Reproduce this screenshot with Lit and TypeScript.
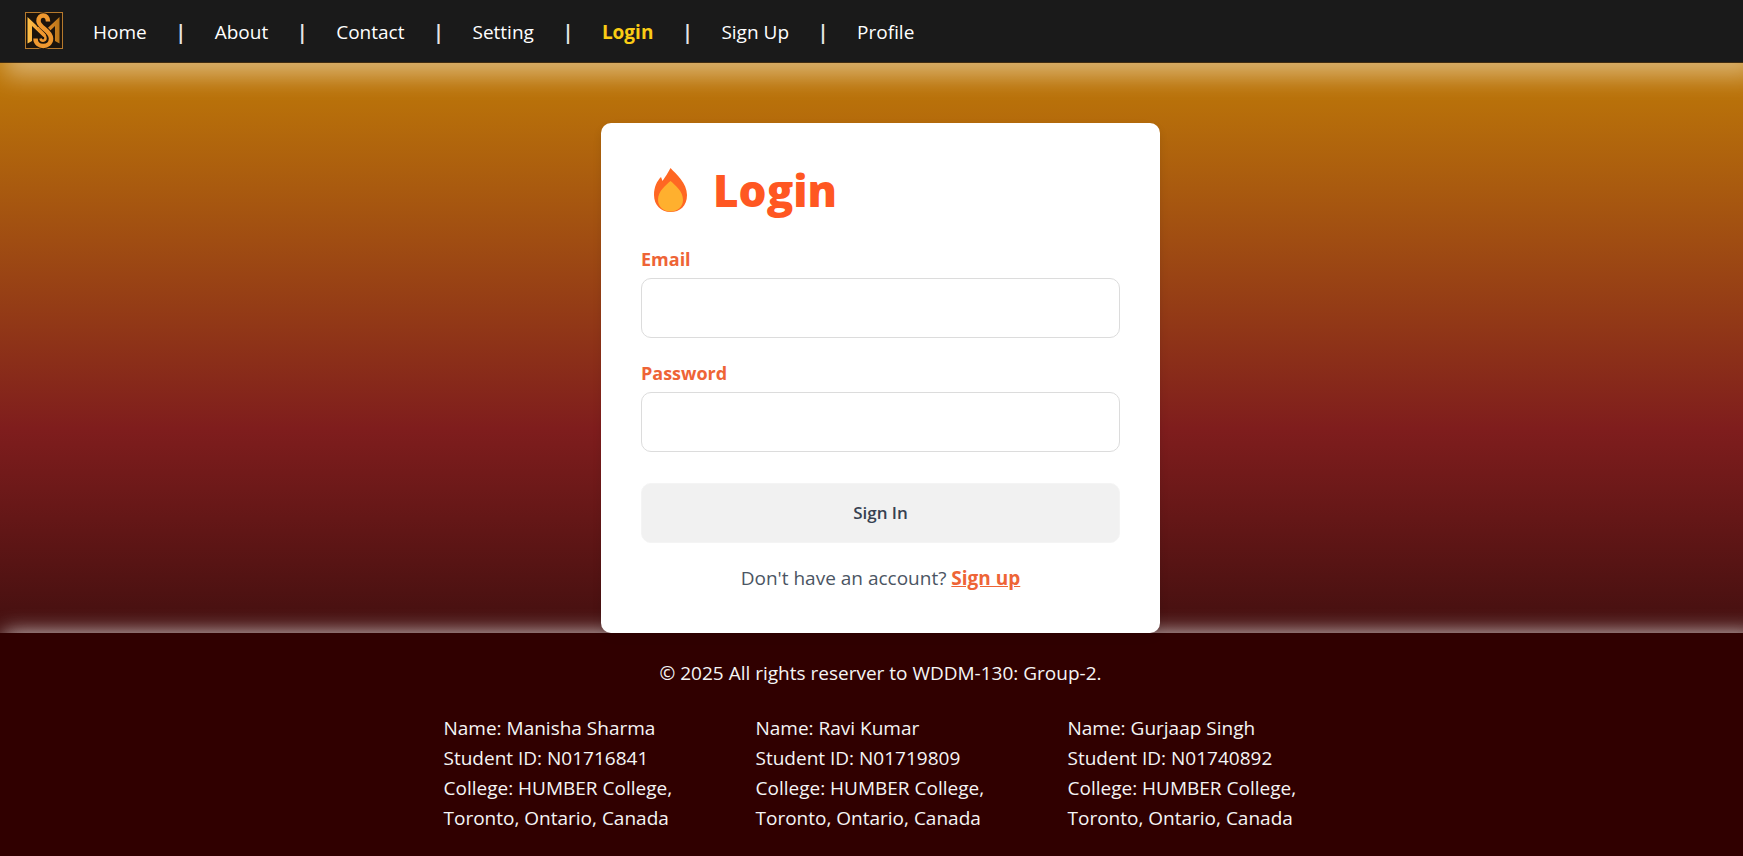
import { LitElement, html, css } from "lit";
import { customElement, property } from "lit/decorators.js";

const links = ["Home", "About", "Contact", "Setting", "Login", "Sign Up", "Profile"];
const students = [
  { name: "Manisha Sharma", id: "N01716841" },
  { name: "Ravi Kumar", id: "N01719809" },
  { name: "Gurjaap Singh", id: "N01740892" },
];

@customElement("site-nav")
class SiteNav extends LitElement {
  @property() current = "";

  static styles = css`
    :host { display: block; position: relative; }
    .bar {
      display: flex; align-items: center; gap: 30px;
      padding: 0 25px; height: 62px; background: #1a1a1a;
      border-bottom: 1px solid #402c10;
      box-shadow: 0 18px 25px -5px rgba(255, 255, 255, 0.42);
    }
    .logo { display: block; width: 38px; height: 38px; }
    .list { display: flex; align-items: center; margin: 0; padding: 2px 0 0; list-style: none; }
    .item { display: flex; align-items: center; line-height: 30px; }
    .item + .item::before {
      content: "|"; display: flex; justify-content: center;
      width: 4px; margin: 0 32px; color: #e5e5e5; font-weight: 700;
    }
    .link { color: #fff; text-decoration: none; }
    .active { color: #facc15; font-weight: 700; }
  `;

  render() {
    return html`<nav class="bar">
      <svg class="logo" viewBox="0 0 38 38" role="img" aria-label="MS logo">
        <defs>
          <linearGradient id="gold" x1="0" x2="1"><stop offset="0" stop-color="#ffc24a" /><stop offset=".5" stop-color="#ef922c" /><stop offset="1" stop-color="#b87518" /></linearGradient>
        </defs>
        <rect x=".5" y=".5" width="37" height="36" fill="#1c140c" stroke="#b6792c" />
        <path d="M2.500 5L18.500 20L34.500 5V31.500L30 29V14L18.500 25L7 14V29L2.500 31.500Z" fill="url(#gold)" />
        <path d="M23 9.500C23 1.500 13.500 1.500 13.500 9C13.500 15.500 26 18.500 26 26.500C26 36.500 10.500 36.500 10.500 26.500" fill="none" stroke="#1c140c" stroke-width="6.500" />
        <path d="M23 9.500C23 1.500 13.500 1.500 13.500 9C13.500 15.500 26 18.500 26 26.500C26 36.500 10.500 36.500 10.500 26.500" fill="none" stroke="#ef982f" stroke-width="4.500" />
        <path d="M12.500 15.500C15 19.500 20.500 22 20.500 26C20.500 29.500 16 29.500 15.500 26.500" fill="none" stroke="#ef982f" stroke-width="2.500" />
      </svg>
      <ul class="list">
        ${links.map((l) => html`<li class="item"><a class="link ${l === this.current ? "active" : ""}" href="#">${l}</a></li>`)}
      </ul>
    </nav>`;
  }
}

@customElement("login-card")
class LoginCard extends LitElement {
  static styles = css`
    :host { display: block; width: 559px; max-width: 100%; position: relative; }
    .card {
      box-sizing: border-box; padding: 40px; background: #fff; border-radius: 10px;
      box-shadow: 0 4px 8px rgba(0, 0, 0, 0.1);
    }
    .head { display: flex; align-items: center; gap: 24px; height: 54px; padding-left: 12px; margin-bottom: 26px; }
    .flame { display: block; width: 36px; height: 46px; }
    .title { margin: 0; font-size: 44px; line-height: 54px; font-weight: 900; color: #ff5722; }
    .field { display: flex; flex-direction: column; gap: 3px; margin-bottom: 19px; }
    .label { font-size: 18px; font-weight: 700; color: #ee6436; line-height: 32px; }
    .input {
      box-sizing: border-box; width: 100%; height: 60px; padding: 0 16px; font: inherit;
      background: #fff; border: 1px solid #dcdcdc; border-radius: 10px;
    }
    .submit {
      display: block; width: 100%; height: 60px; margin-top: 31px; padding: 0 16px 2px;
      font: inherit; font-size: 17px; font-weight: 600; color: #374151;
      background: #f1f1f1; border: 1px solid #f4f4f4; border-radius: 10px;
    }
    .note { margin: 20px 0 0; line-height: 30px; text-align: center; color: #4b5563; }
    .signup { color: #ee6436; font-weight: 700; text-decoration: underline; }
  `;

  render() {
    return html`<form class="card">
      <div class="head">
        <svg class="flame" viewBox="0 0 36 46" aria-hidden="true">
          <path d="M17.500 1C23 7 34 16 34 28C34 39 27 45 17.500 45C8 45 1 38 1 28C1 20 4 14 8 10L9.500 14C12 10 15 6 17.500 1Z" fill="#ff6723" />
          <path d="M17.500 14C22 18 30 24 30 33C30 40 24 44.500 17.500 44.500C11 44.500 5 40 5 33C5 24 13 18 17.500 14Z" fill="#ffb02e" />
        </svg>
        <h1 class="title">Login</h1>
      </div>
      <div class="field">
        <label class="label" for="email">Email</label>
        <input class="input" id="email" type="email" />
      </div>
      <div class="field">
        <label class="label" for="password">Password</label>
        <input class="input" id="password" type="password" />
      </div>
      <button class="submit" type="button">Sign In</button>
      <p class="note">Don't have an account? <a class="signup" href="#">Sign up</a></p>
    </form>`;
  }
}

@customElement("site-footer")
class SiteFooter extends LitElement {
  static styles = css`
    :host { display: block; }
    .footer {
      display: flex; flex-direction: column; align-items: center; gap: 25px;
      padding: 25px 20px; background: #300000; color: #f5f5f5; line-height: 30px;
      box-shadow: 0 -4px 20px -4px rgba(255, 255, 255, 0.8);
    }
    .text { margin: 0; }
    .students { display: grid; grid-template-columns: repeat(3, 250px); gap: 62px; }
  `;

  render() {
    return html`<footer class="footer">
      <p class="text">© 2025 All rights reserver to WDDM-130: Group-2.</p>
      <div class="students">
        ${students.map((s) => html`<div>
          <p class="text">Name: ${s.name}</p>
          <p class="text">Student ID: ${s.id}</p>
          <p class="text">College: HUMBER College, Toronto, Ontario, Canada</p>
        </div>`)}
      </div>
    </footer>`;
  }
}

@customElement("app-root")
class AppRoot extends LitElement {
  static styles = css`
    :host {
      display: block; overflow: hidden;
      font-family: "Segoe UI", "Open Sans", "Noto Sans", sans-serif; font-size: 19px;
    }
    .page {
      display: flex; flex-direction: column; width: calc(100% + 18px); min-height: 100vh;
      background: linear-gradient(#ca8a04, #7f1d1d, #000);
    }
    .main { display: flex; justify-content: center; flex: 1; padding: 60px 20px 0; }
    .card { z-index: 1; }
  `;

  render() {
    return html`<div class="page">
      <site-nav current="Login"></site-nav>
      <main class="main"><login-card class="card"></login-card></main>
      <site-footer></site-footer>
    </div>`;
  }
}
